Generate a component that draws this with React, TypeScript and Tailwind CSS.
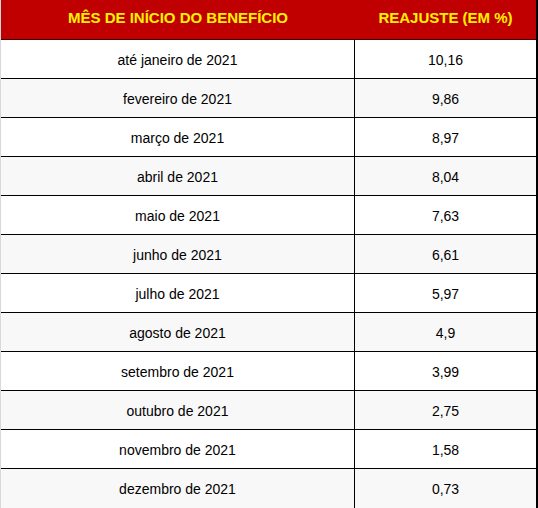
const rows: [string, string][] = [
  ['até janeiro de 2021', '10,16'],
  ['fevereiro de 2021', '9,86'],
  ['março de 2021', '8,97'],
  ['abril de 2021', '8,04'],
  ['maio de 2021', '7,63'],
  ['junho de 2021', '6,61'],
  ['julho de 2021', '5,97'],
  ['agosto de 2021', '4,9'],
  ['setembro de 2021', '3,99'],
  ['outubro de 2021', '2,75'],
  ['novembro de 2021', '1,58'],
  ['dezembro de 2021', '0,73'],
];

export default function App() {
  return (
    <div className="w-[538px] h-[508px] bg-white font-['Liberation_Sans',Arial,sans-serif] text-[14px] text-black">
      <div className="border-l border-l-[#d8d8d8] border-r-2 border-r-black border-b-2 border-b-black">
        {/* header */}
        <div className="flex h-[40px] bg-[#c00000] border-b border-b-[#400000] font-bold text-[15px] text-[#fff200]">
          <div className="w-[354px] flex items-center justify-center pb-[2px]">MÊS DE INÍCIO DO BENEFÍCIO</div>
          <div className="flex-1 flex items-center justify-center pb-[2px]">REAJUSTE (EM %)</div>
        </div>

        {rows.map(([mes, valor], i) => (
          <div
            key={mes}
            className={`flex h-[39px] ${i < rows.length - 1 ? 'border-b border-b-black' : ''} ${i % 2 === 1 ? 'bg-[#f8f8f8]' : 'bg-white'}`}
          >
            <div className="w-[354px] border-r border-r-black flex items-center justify-center pt-[2px]">{mes}</div>
            <div className="flex-1 flex items-center justify-center pt-[2px]">{valor}</div>
          </div>
        ))}
      </div>
    </div>
  );
}
